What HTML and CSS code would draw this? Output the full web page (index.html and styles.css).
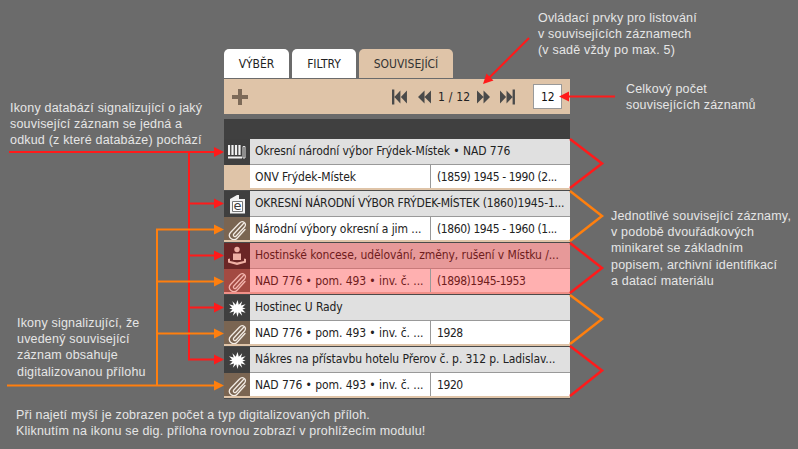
FILE: index.html
```html
<!DOCTYPE html>
<html lang="cs">
<head>
<meta charset="utf-8">
<title>Související záznamy</title>
<link rel="stylesheet" href="styles.css">
</head>
<body>
<main class="panel">
  <nav class="tabs">
    <div class="tab tab-white tab-a">VÝBĚR</div>
    <div class="tab tab-white tab-b">FILTRY</div>
    <div class="tab tab-active">SOUVISEJÍCÍ</div>
  </nav>
  <div class="toolbar">
    <svg class="plus" width="18" height="18" viewBox="0 0 18 18"><path d="M7 1h4v6h6v4h-6v6H7v-6H1V7h6z" fill="#7d6a58"/></svg>
    <div class="pager">
      <svg width="16" height="16" viewBox="0 0 16 16"><path d="M0 0h2.500v16H0zM9 1v14L2.500 8zM16 1v14L9.500 8z" fill="#4a4a4a"/></svg>
      <svg class="prev" width="14" height="14" viewBox="0 0 14 14"><path d="M7 0v14L0 7zM14 0v14L7 7z" fill="#4a4a4a"/></svg>
      <span class="pages">1 / 12</span>
      <svg class="next" width="14" height="14" viewBox="0 0 14 14"><path d="M0 0v14l7-7zM7 0v14l7-7z" fill="#4a4a4a"/></svg>
      <svg class="last" width="16" height="16" viewBox="0 0 16 16"><path d="M16 0h-2.500v16H16zM7 1v14l6.500-7zM0 1v14l6.500-7z" fill="#4a4a4a"/></svg>
    </div>
    <div class="count">12</div>
  </div>
  <div class="darkbar"></div>

  <svg width="0" height="0" class="defs">
    <defs>
      <symbol id="clip" viewBox="0 0 20 22"><path d="M16.500 5.500 6.800 16c-1.400 1.600 1 3.600 2.400 2l8.300-9c3-3.300-1.900-7.300-4.900-4L3.500 14.500c-4 4.500 2.900 9.800 6.800 5.500L18 11.500" fill="none" stroke="currentColor" stroke-width="1.300" stroke-linecap="round"/></symbol>
      <symbol id="star" viewBox="0 0 20 20"><path d="M10 0l1.500 5.600L15.500 1.500l-1.500 5 5.500-1.500-3.700 3.700 3.700 1.300-3.700 1.300 3.700 3.700-5.500-1.500 1.500 5-4-4.100L10 20l-1.500-5.600-4 4.100 1.500-5-5.500 1.500 3.700-3.700L.2 10l3.500-1.300L0 5l5.500 1.500-1.500-5 4 4.100z" fill="#fff"/></symbol>
    </defs>
  </svg>

  <article class="rec">
    <div class="line title"><div class="ico dark"><svg width="18" height="16" viewBox="0 0 18 16"><path d="M1 1v10M4.500 1v10M8 1v10M11.500 1v10" stroke="#f2f2f2" stroke-width="2.200" fill="none"/><path d="M15 2.500h2v11.500h-2z" fill="none" stroke="#ddd"/><path d="M0 13.500h14" stroke="#f2f2f2" stroke-width="2"/></svg></div><div class="txt">Okresní národní výbor Frýdek-Místek • NAD 776</div></div>
    <div class="line sub"><div class="ico tan"></div><div class="txt name">ONV Frýdek-Místek</div><div class="txt date">(1859) 1945 - 1990 (2...</div></div>
  </article>
  <article class="rec">
    <div class="line title"><div class="ico dark"><svg width="17" height="20" viewBox="0 0 17 20"><path d="M1 5 8 1h2v4zM1 5h15v14.500H1z" fill="#f2f2f2"/><path d="M3.500 7.500h10v10h-10z" fill="#fff" stroke="#777"/><text x="8.500" y="16" class="e">e</text></svg></div><div class="txt upper">OKRESNÍ NÁRODNÍ VÝBOR FRÝDEK-MÍSTEK (1860)1945-1...</div></div>
    <div class="line sub"><div class="ico brown"><svg width="20" height="22"><use href="#clip"/></svg></div><div class="txt name">Národní výbory okresní a jim ...</div><div class="txt date">(1860) 1945 - 1960 (1...</div></div>
  </article>
  <article class="rec red">
    <div class="line title"><div class="ico dark"><svg width="20" height="20" viewBox="0 0 20 20" fill="#efb0a4"><circle cx="10" cy="3.500" r="2.700"/><path d="M6 7.500h8v6.500H6zM1 13l2-.5V15l7 1.500 7-1.500v-2.500l2 .5v3.500l-9 2.500-9-2.500z"/></svg></div><div class="txt">Hostinské koncese, udělování, změny, rušení v Místku /...</div></div>
    <div class="line sub"><div class="ico brown"><svg width="20" height="22"><use href="#clip"/></svg></div><div class="txt name">NAD 776 • pom. 493 • inv. č. ...</div><div class="txt date">(1898)1945-1953</div></div>
  </article>
  <article class="rec">
    <div class="line title"><div class="ico dark"><svg width="17" height="17"><use href="#star"/></svg></div><div class="txt">Hostinec U Rady</div></div>
    <div class="line sub"><div class="ico brown"><svg width="20" height="22"><use href="#clip"/></svg></div><div class="txt name">NAD 776 • pom. 493 • inv. č. ...</div><div class="txt date">1928</div></div>
  </article>
  <article class="rec">
    <div class="line title"><div class="ico dark"><svg width="17" height="17"><use href="#star"/></svg></div><div class="txt">Nákres na přístavbu hotelu Přerov č. p. 312 p. Ladislav...</div></div>
    <div class="line sub"><div class="ico brown"><svg width="20" height="22"><use href="#clip"/></svg></div><div class="txt name">NAD 776 • pom. 493 • inv. č. ...</div><div class="txt date">1920</div></div>
  </article>
</main>

<svg class="arrows" width="798" height="449" viewBox="0 0 798 449">
  <g fill="none" stroke="#ff1a1a" stroke-width="2">
    <path d="M9 152H216M189 152V359.500H216M189 203.500H216M189 255.500H216M189 307.500H216"/>
    <path d="M529 38 488 79M615 96.500H568"/>
  </g>
  <g fill="#ff1a1a">
    <path d="M224 152l-10-5v10zM224 203.500l-10-5v10zM224 255.500l-10-5v10zM224 307.500l-10-5v10zM224 359.500l-10-5v10z"/>
    <path d="M483 84l3.500-10.500 7 7zM559 96.500l10-5v10z"/>
  </g>
  <g fill="none" stroke="#ff7f0e" stroke-width="2">
    <path d="M7 385.500H216M157 385.500V229.500H216M157 281.500H216M157 333.500H216"/>
  </g>
  <g fill="#ff7f0e"><path d="M224 229.500l-10-5v10zM224 281.500l-10-5v10zM224 333.500l-10-5v10zM224 385.500l-10-5v10z"/></g>
  <g fill="none" stroke="#ff7f0e" stroke-width="2.500">
    <path d="M570 191 602 216 570 241M570 295 602 319 570 344"/>
  </g>
  <g fill="none" stroke="#ff1a1a" stroke-width="2.500">
    <path d="M570 139 602 163.500 570 188M570 243 602 268 570 293M570 346 602 370.500 570 396"/>
  </g>
</svg>

<p class="note n1">Ovládací prvky pro listování<br>v souvisejících záznamech<br>(v sadě vždy po max. 5)</p>
<p class="note n2">Celkový počet<br>souvisejících záznamů</p>
<p class="note n3">Ikony databází signalizující o jaký<br>související záznam se jedná a<br>odkud (z které databáze) pochází</p>
<p class="note n4">Jednotlivé související záznamy,<br>v podobě dvouřádkových<br>minikaret se základním<br>popisem, archivní identifikací<br>a datací materiálu</p>
<p class="note n5">Ikony signalizující, že<br>uvedený související<br>záznam obsahuje<br>digitalizovanou přílohu</p>
<p class="note n6">Při najetí myší je zobrazen počet a typ digitalizovaných příloh.<br>Kliknutím na ikonu se dig. příloha rovnou zobrazí v prohlížecím modulu!</p>
</body>
</html>
```
FILE: styles.css
```css
* { box-sizing: border-box; }
html, body { margin: 0; padding: 0; }
body { width: 798px; height: 449px; background: #6b6b6b; overflow: hidden; position: relative; }
.panel { width: 346px; margin-left: 224px; padding-top: 49px; font: 12px/16px "DejaVu Sans Condensed", "DejaVu Sans", Tahoma, sans-serif; font-stretch: condensed; color: #222; }
.tabs { display: flex; gap: 3px; height: 30px; }
.tab { height: 29px; border-radius: 5px 5px 0 0; display: flex; align-items: center; justify-content: center; padding-top: 1px; color: #222; }
.tab-white { background: #fff; }
.tab-a { width: 65px; }
.tab-b { width: 64px; }
.tab-active { width: 94px; background: #dfc4a8; color: #333; }
.toolbar { height: 35px; background: #dfc4a8; display: flex; align-items: center; padding: 0 8px 0 7px; }
.plus { margin-right: 143px; }
.pager { width: 123px; display: flex; align-items: center; color: #222; }
.prev { margin-left: 11px; }
.pages { width: 32px; margin: 0 7px; letter-spacing: .2px; white-space: nowrap; }
.last { margin-left: 10px; }
.count { width: 29px; height: 25px; margin-left: 18px; background: #fff; border: 1px solid #999; display: flex; align-items: center; justify-content: flex-start; padding-left: 7px; color: #111; }
.darkbar { height: 20px; margin-top: 5px; background: #404040; }
.defs { position: absolute; }
.rec { height: 52px; border-bottom: 1px solid #4a4a4a; background: #dfc4a8; }
.line { display: flex; }
.title { height: 26px; background: #e0e0e0; border-bottom: 1px solid #999; }
.sub { height: 23px; background: #fff; }
.ico { width: 26px; flex: none; display: flex; align-items: center; justify-content: center; color: #f3ece5; }
.dark { background: #3f3f3f; height: 26px; }
.brown { background: #7a6552; }
.tan { background: #dfc4a8; }
.txt { padding-left: 5px; white-space: nowrap; line-height: 24px; letter-spacing: -.08px; }
.upper { letter-spacing: -.18px; }
.name { width: 181px; border-right: 1px solid #999; }
.date { flex: 1; padding-left: 6px; letter-spacing: -.42px; }
.e { font: 13px "DejaVu Sans", sans-serif; fill: #3f3f3f; text-anchor: middle; }
.red { background: #f09088; }
.red .title { background: #e79999; border-bottom-color: #c87a7a; color: #6f1c1c; }
.red .sub { background: #ffb0b0; color: #6f1c1c; }
.red .dark { background: #6b2626; }
.red .brown { background: #a34a42; color: #f3b5ae; }
.arrows { position: absolute; left: 0; top: 0; }
.note { position: absolute; margin: 0; font: 12.5px/16.2px "Liberation Sans", Arial, sans-serif; letter-spacing: .19px; color: #e6e6e6; white-space: nowrap; }
.n1 { left: 538px; top: 10px; }
.n2 { left: 626px; top: 81px; }
.n3 { left: 10px; top: 100px; }
.n4 { left: 611px; top: 208px; }
.n5 { left: 17px; top: 315px; }
.n6 { left: 16px; top: 407px; }
```
